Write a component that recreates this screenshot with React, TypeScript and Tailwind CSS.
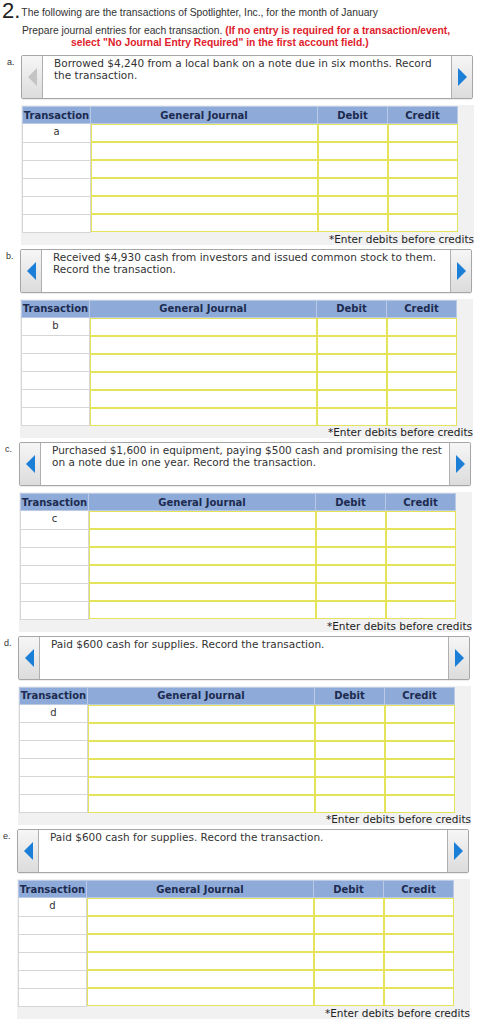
import React from "react";

type Entry = {
  label: string;
  letter: string;
  text: string[];
  prevDisabled?: boolean;
  pad: string;
};

const entries: Entry[] = [
  {
    label: "a.",
    letter: "a",
    text: ["Borrowed $4,240 from a local bank on a note due in six months. Record", "the transaction."],
    prevDisabled: true,
    pad: "pl-[7px]",
  },
  {
    label: "b.",
    letter: "b",
    text: ["Received $4,930 cash from investors and issued common stock to them.", "Record the transaction."],
    pad: "pl-[6px]",
  },
  {
    label: "c.",
    letter: "c",
    text: ["Purchased $1,600 in equipment, paying $500 cash and promising the rest", "on a note due in one year. Record the transaction."],
    pad: "pl-[5px]",
  },
  {
    label: "d.",
    letter: "d",
    text: ["Paid $600 cash for supplies. Record the transaction."],
    pad: "pl-[4px]",
  },
  {
    label: "e.",
    letter: "d",
    text: ["Paid $600 cash for supplies. Record the transaction."],
    pad: "pl-[3px]",
  },
];

function Arrow({ dir, disabled }: { dir: "left" | "right"; disabled?: boolean }) {
  const color = disabled ? "#c4c4c4" : "#1b7fd8";
  return (
    <div className="w-[20px] self-stretch flex items-center justify-center bg-gradient-to-b from-[#f6f6f6] to-[#dcdcdc] shrink-0">
      <svg width="9" height="18" viewBox="0 0 9 18">
        {dir === "left" ? (
          <polygon points="9,0 0,9 9,18" fill={color} />
        ) : (
          <polygon points="0,0 9,9 0,18" fill={color} />
        )}
      </svg>
    </div>
  );
}

function JournalTable({ letter }: { letter: string }) {
  const rows = [0, 1, 2, 3, 4, 5];
  return (
    <div className="bg-[#f1f1f1] mt-[6px] w-[453px] pt-[1px] pl-[1px]">
      <table className="border-collapse table-fixed w-[435px] text-[10px]">
        <colgroup>
          <col className="w-[68px]" />
          <col className="w-[227px]" />
          <col className="w-[70px]" />
          <col className="w-[70px]" />
        </colgroup>
        <thead>
          <tr className="h-[17px] bg-[#8eaad8] text-[#1c2b4f] font-bold">
            <th className="border border-[#b9c9e6] p-0 leading-[15px] text-center">Transaction</th>
            <th className="border border-[#b9c9e6] p-0 leading-[15px] text-center">General Journal</th>
            <th className="border border-[#b9c9e6] p-0 leading-[15px] text-center">Debit</th>
            <th className="border border-[#b9c9e6] p-0 leading-[15px] text-center">Credit</th>
          </tr>
        </thead>
        <tbody>
          {rows.map((r) => (
            <tr key={r} className="h-[18px]">
              <td className="bg-white border border-[#d6d6d6] p-0 text-center align-top leading-[15px] text-[#333]">
                {r === 0 ? letter : ""}
              </td>
              <td className="bg-white p-0">
                <div className="h-[18px] border border-[#e4e35a]" />
              </td>
              <td className="bg-white p-0">
                <div className="h-[18px] border border-[#e4e35a]" />
              </td>
              <td className="bg-white p-0">
                <div className="h-[18px] border border-[#e4e35a]" />
              </td>
            </tr>
          ))}
        </tbody>
      </table>
      <div className="text-right text-[10.5px] leading-[12px] h-[12px] text-[#222]">
        *Enter debits before credits
      </div>
    </div>
  );
}

function Section({ entry }: { entry: Entry }) {
  return (
    <div className={`flex ${entry.pad} mb-[4px]`}>
      <div className="w-[14px] shrink-0 text-[9px] text-[#333] pt-[1px] font-['Liberation_Sans',Arial,sans-serif]">
        {entry.label}
      </div>
      <div>
        <div className="flex w-[452px] h-[44px] border border-[#a6a6a6] rounded-[2px] bg-white overflow-hidden shadow-[0_1px_1px_rgba(0,0,0,0.08)]">
          <div className="flex border-r border-[#b0b0b0]">
            <Arrow dir="left" disabled={entry.prevDisabled} />
          </div>
          <div className="flex-1 pl-[11px] pt-[1px] text-[10.5px] leading-[12px] text-[#333]">
            {entry.text.map((t, i) => (
              <div key={i} className="whitespace-nowrap">
                {t}
              </div>
            ))}
          </div>
          <div className="flex border-l border-[#b0b0b0]">
            <Arrow dir="right" />
          </div>
        </div>
        <JournalTable letter={entry.letter} />
      </div>
    </div>
  );
}

export default function App() {
  return (
    <div className="w-[482px] h-[1024px] overflow-hidden bg-white font-['DejaVu_Sans',Verdana,sans-serif]">
      <div className="font-['Liberation_Sans',Arial,sans-serif] text-[#333]">
        <div className="flex items-end pl-[2px]">
          <span className="text-[22px] leading-[22px] text-[#222]">2.</span>
          <span className="text-[10.3px] leading-[12px] ml-[1px] mb-[3px]">
            The following are the transactions of Spotlighter, Inc., for the month of January
          </span>
        </div>
        <div className="pl-[22px] mt-[3px] text-[10.3px] leading-[12px]">
          Prepare journal entries for each transaction.{" "}
          <span className="text-[#e0212b] font-bold">(If no entry is required for a transaction/event,</span>
        </div>
        <div className="pl-[71px] text-[10.3px] leading-[12px] text-[#e0212b] font-bold">
          select "No Journal Entry Required" in the first account field.)
        </div>
      </div>
      <div className="mt-[6px]">
        {entries.map((e) => (
          <Section key={e.label} entry={e} />
        ))}
      </div>
    </div>
  );
}
